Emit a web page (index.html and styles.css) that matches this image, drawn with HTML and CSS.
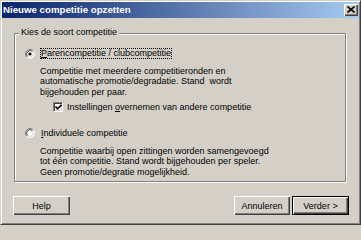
FILE: index.html
```html
<!DOCTYPE html>
<html>
<head>
<meta charset="utf-8">
<link rel="stylesheet" href="styles.css">
</head>
<body>
<div class="window">
  <div class="titlebar">
    <span class="title">Nieuwe competitie opzetten</span>
    <span class="close"><svg width="8" height="7" viewBox="0 0 8 7"><path d="M0.5 0.5 L7.5 6.5 M7.5 0.5 L0.5 6.5" stroke="#000" stroke-width="1.6" fill="none"/></svg></span>
  </div>
  <div class="content">
    <div class="group">
      <span class="legend">Kies de soort competitie</span>
      <div class="option opt1">
        <span class="radio"><svg width="10" height="10" viewBox="0 0 10 10">
          <circle cx="5" cy="5" r="4" fill="#fff"/>
          <path d="M1.82 8.18 A4.5 4.5 0 0 1 8.18 1.82" stroke="#808080" fill="none"/>
          <path d="M8.18 1.82 A4.5 4.5 0 0 1 1.82 8.18" stroke="#fff" fill="none"/>
          <path d="M2.53 7.47 A3.5 3.5 0 0 1 7.47 2.53" stroke="#404040" fill="none"/>
          <path d="M7.47 2.53 A3.5 3.5 0 0 1 2.53 7.47" stroke="#d4d0c8" fill="none"/>
          <circle cx="5" cy="5" r="1.6" fill="#000"/>
        </svg></span>
        <span class="label focus"><u>P</u>arencompetitie / clubcompetitie</span>
      </div>
      <div class="desc desc1">Competitie met meerdere competitieronden en<br>automatische promotie/degradatie. Stand&nbsp; wordt<br>bijgehouden per paar.</div>
      <div class="check-row">
        <span class="checkbox"><svg width="7" height="7" viewBox="0 0 7 7"><path d="M0.5 2.5 L2.5 4.8 L6.5 0.8" stroke="#000" stroke-width="1.6" fill="none"/></svg></span>
        <span class="check-label">Instellingen <u>o</u>vernemen van andere competitie</span>
      </div>
      <div class="option opt2">
        <span class="radio"><svg width="10" height="10" viewBox="0 0 10 10">
          <circle cx="5" cy="5" r="4" fill="#fff"/>
          <path d="M1.82 8.18 A4.5 4.5 0 0 1 8.18 1.82" stroke="#808080" fill="none"/>
          <path d="M8.18 1.82 A4.5 4.5 0 0 1 1.82 8.18" stroke="#fff" fill="none"/>
          <path d="M2.53 7.47 A3.5 3.5 0 0 1 7.47 2.53" stroke="#404040" fill="none"/>
          <path d="M7.47 2.53 A3.5 3.5 0 0 1 2.53 7.47" stroke="#d4d0c8" fill="none"/>
        </svg></span>
        <span class="label"><u>I</u>ndividuele competitie</span>
      </div>
      <div class="desc desc2">Competitie waarbij open zittingen worden samengevoegd<br>tot één competitie. Stand wordt bijgehouden per speler.<br>Geen promotie/degratie mogelijkheid.</div>
    </div>
    <div class="buttons">
      <button class="btn help">Help</button>
      <span class="spacer"></span>
      <button class="btn cancel">Annuleren</button>
      <button class="btn default">Verder &gt;</button>
    </div>
  </div>
</div>
</body>
</html>
```

FILE: styles.css
```css
html, body {
  margin: 0;
  padding: 0;
  background: #d4d0c8;
}
.window {
  width: 361px;
  height: 225px;
  box-sizing: border-box;
  border: 1px solid;
  border-color: #d4d0c8 #404040 #404040 #d4d0c8;
  box-shadow: inset 1px 1px 0 #fff, inset -1px -1px 0 #808080;
  padding: 1px 1px 1px 1px;
  background: #d4d0c8;
  font-family: "Liberation Sans", Arial, sans-serif;
  font-size: 9px;
  color: #000;
  display: flex;
  flex-direction: column;
}
.titlebar {
  height: 16px;
  background: linear-gradient(to right, #0a246a, #a6caf0);
  display: flex;
  align-items: center;
}
.title {
  color: #fff;
  font-weight: bold;
  font-size: 9.7px;
  padding-left: 1px;
  flex: 1;
  line-height: 16px;
}
.close {
  width: 14px;
  height: 12px;
  box-sizing: border-box;
  margin-right: 1px;
  background: #d4d0c8;
  box-shadow: inset 1px 1px 0 #fff, inset -1px -1px 0 #404040, inset -2px -2px 0 #808080;
  display: flex;
  align-items: center;
  justify-content: center;
}
.close svg {
  display: block;
  margin-top: -1px;
}
.content {
  flex: 1;
  display: flex;
  flex-direction: column;
}
.group {
  position: relative;
  margin: 15px 0 0 12px;
  width: 332px;
  height: 149px;
  box-sizing: border-box;
  border: 1px solid #808080;
  box-shadow: 1px 1px 0 #fff, inset 1px 1px 0 #fff;
  display: flex;
  flex-direction: column;
}
.legend {
  position: absolute;
  left: 4px;
  top: -7px;
  padding: 0 2px;
  line-height: 11px;
  background: #d4d0c8;
}
.option {
  display: flex;
  align-items: center;
  height: 11px;
}
.opt1 {
  margin-top: 14px;
}
.opt2 {
  margin-top: 15.5px;
}
.radio {
  margin-left: 10px;
  width: 10px;
  height: 10px;
}
.radio svg {
  display: block;
}
.label {
  margin-left: 5px;
  border: 1px dotted transparent;
  line-height: 9px;
  padding: 0;
}
.label.focus {
  border-color: #000;
}
.desc {
  padding-left: 25px;
  line-height: 10.4px;
}
.desc1 {
  margin-top: 7px;
}
.desc2 {
  margin-top: 7px;
}
.check-row {
  margin-top: 5px;
  display: flex;
  align-items: center;
  height: 10px;
}
.checkbox {
  margin-left: 38px;
  width: 10px;
  height: 10px;
  box-sizing: border-box;
  border: 1px solid;
  border-color: #808080 #fff #fff #808080;
  box-shadow: inset 1px 1px 0 #404040, inset -1px -1px 0 #d4d0c8;
  background: #fff;
  display: flex;
  align-items: center;
  justify-content: center;
}
.checkbox svg {
  display: block;
}
.check-label {
  margin-left: 4px;
  line-height: 10px;
}
.buttons {
  margin-top: 14px;
  display: flex;
  padding: 0 10px 0 11px;
}
.spacer {
  flex: 1;
}
.btn {
  width: 57px;
  height: 19px;
  box-sizing: border-box;
  margin: 0;
  padding: 0;
  border: none;
  background: #d4d0c8;
  font-family: "Liberation Sans", Arial, sans-serif;
  font-size: 9px;
  color: #000;
  box-shadow: inset 1px 1px 0 #fff, inset -1px -1px 0 #404040, inset -2px -2px 0 #808080;
}
.cancel {
  width: 56px;
  margin-right: 2px;
}
.btn.default {
  border: 1px solid #000;
}
```
